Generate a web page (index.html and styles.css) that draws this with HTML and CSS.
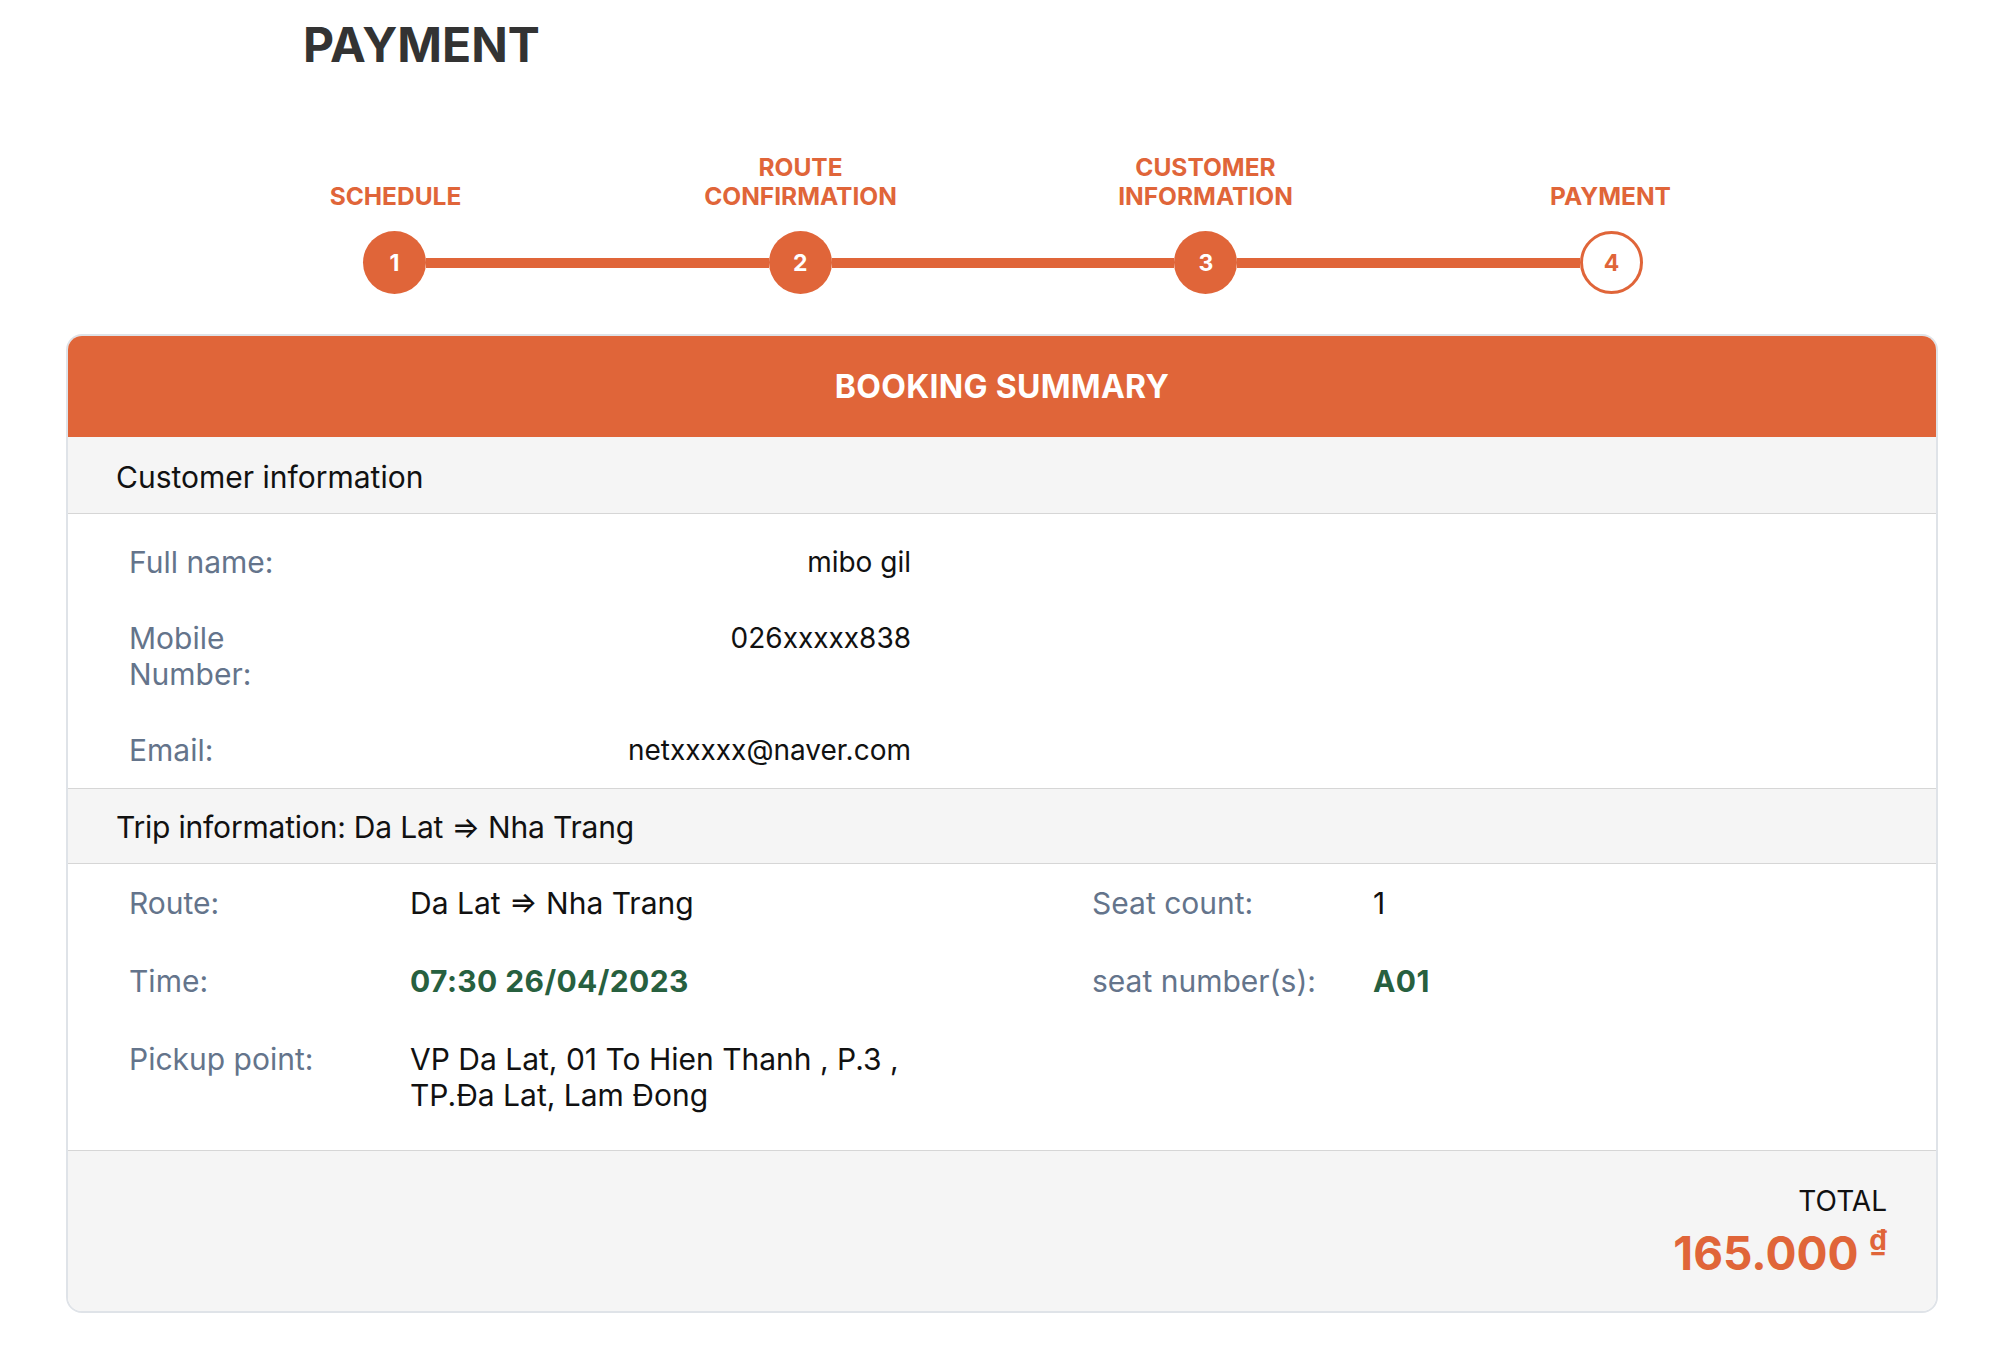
FILE: index.html
```html
<!DOCTYPE html>
<html lang="en">
<head>
<meta charset="utf-8">
<title>Payment</title>
<link rel="stylesheet" href="styles.css">
</head>
<body>
<header class="page-head">
  <h1 class="page-title">PAYMENT</h1>
</header>

<section class="stepper">
  <div class="step-labels">
    <div class="step-label">SCHEDULE</div>
    <div class="step-label">ROUTE<br>CONFIRMATION</div>
    <div class="step-label">CUSTOMER<br>INFORMATION</div>
    <div class="step-label">PAYMENT</div>
  </div>
  <div class="track">
    <div class="dot done">1</div>
    <div class="bar"></div>
    <div class="dot done">2</div>
    <div class="bar"></div>
    <div class="dot done">3</div>
    <div class="bar"></div>
    <div class="dot current">4</div>
  </div>
</section>

<section class="card">
  <div class="card-head">BOOKING SUMMARY</div>

  <div class="band">Customer information</div>
  <div class="cust-body">
    <div class="cust-row"><div class="lbl">Full name:</div><div class="val">mibo gil</div></div>
    <div class="cust-row"><div class="lbl">Mobile Number:</div><div class="val">026xxxxx838</div></div>
    <div class="cust-row"><div class="lbl">Email:</div><div class="val">netxxxxx@naver.com</div></div>
  </div>

  <div class="band band-trip">Trip information: Da Lat ⇒ Nha Trang</div>
  <div class="trip-body">
    <div class="trip-col trip-left">
      <div class="trip-row"><div class="lbl">Route:</div><div class="tval">Da Lat ⇒ Nha Trang</div></div>
      <div class="trip-row"><div class="lbl">Time:</div><div class="tval green">07:30 26/04/2023</div></div>
      <div class="trip-row"><div class="lbl">Pickup point:</div><div class="tval">VP Da Lat, 01 To Hien Thanh , P.3 , TP.Đa Lat, Lam Đong</div></div>
    </div>
    <div class="trip-col trip-right">
      <div class="trip-row"><div class="lbl">Seat count:</div><div class="tval">1</div></div>
      <div class="trip-row"><div class="lbl">seat number(s):</div><div class="tval green">A01</div></div>
    </div>
  </div>

  <div class="card-foot">
    <div class="total-label">TOTAL</div>
    <div class="total-price">165.000 <sup class="cur">₫</sup></div>
  </div>
</section>
</body>
</html>
```

FILE: styles.css
```css
* { box-sizing: border-box; }

html, body {
  margin: 0;
  padding: 0;
  background: #ffffff;
}

body {
  font-family: Inter, "Noto Sans", "Liberation Sans", sans-serif;
  color: #111111;
  width: 1998px;
}

.page-head {
  padding: 16px 0 0 303px;
}

.page-title {
  margin: 0;
  font-size: 48px;
  line-height: 58px;
  font-weight: 700;
  color: #333333;
  letter-spacing: 0;
}

/* Stepper */
.stepper {
  width: 1628px;
  margin: 79px auto 0;
  padding-left: 8px;
}

.step-labels {
  display: grid;
  grid-template-columns: repeat(4, 1fr);
  align-items: end;
}

.step-label {
  text-align: center;
  font-size: 24.5px;
  line-height: 29px;
  font-weight: 700;
  color: #e06539;
}

.track {
  display: flex;
  align-items: center;
  padding: 0 170px 0 170px;
  margin-top: 20px;
}

.dot {
  width: 63px;
  height: 63px;
  border-radius: 50%;
  flex: 0 0 auto;
  display: flex;
  align-items: center;
  justify-content: center;
  font-size: 23px;
  font-weight: 700;
}

.dot.done {
  background: #e06539;
  color: #ffffff;
}

.dot.current {
  background: #ffffff;
  border: 3px solid #e06539;
  color: #e06539;
}

.bar {
  flex: 1 1 auto;
  height: 10px;
  background: #e06539;
}

/* Card */
.card {
  margin: 40px 60px 0 66px;
  border: 2px solid #dfe3e8;
  border-radius: 16px;
  overflow: hidden;
}

.card-head {
  background: #e06539;
  color: #ffffff;
  text-align: center;
  font-size: 32px;
  font-weight: 700;
  height: 101px;
  line-height: 101px;
  letter-spacing: 0.3px;
}

.band {
  background: #f5f5f5;
  font-size: 30px;
  line-height: 36px;
  padding: 22px 48px 18px 48px;
  border-bottom: 1px solid #d6d6d6;
  color: #111111;
}

.band-trip {
  border-top: 1px solid #d6d6d6;
  padding: 20px 48px 18px;
  letter-spacing: -0.2px;
}

.lbl {
  color: #64748b;
  font-size: 30px;
  line-height: 36px;
}

.cust-body {
  width: 843px;
  padding: 10px 0 0 61px;
}

.cust-row {
  display: grid;
  grid-template-columns: 180px 1fr;
  padding: 20px 0;
}

.val {
  text-align: right;
  font-size: 28px;
  line-height: 36px;
}

.trip-body {
  display: grid;
  grid-template-columns: 963px 1fr;
  padding: 0 0 16px 61px;
}

.trip-row {
  display: grid;
  grid-template-columns: 281px 1fr;
  padding: 21px 0;
}

.trip-left .tval {
  max-width: 530px;
}

.tval {
  font-size: 30px;
  line-height: 36px;
}

.tval.green {
  color: #27603f;
  font-weight: 700;
  letter-spacing: 0.4px;
}

.card-foot {
  background: #f5f5f5;
  border-top: 1px solid #d6d6d6;
  padding: 32px 49px 24px 0;
  text-align: right;
}

.total-label {
  font-size: 28px;
  line-height: 36px;
  color: #111111;
}

.total-price {
  font-size: 46px;
  line-height: 68px;
  font-weight: 700;
  color: #e06539;
}

.cur {
  font-size: 28px;
  vertical-align: 20px;
  line-height: 0;
}
```
